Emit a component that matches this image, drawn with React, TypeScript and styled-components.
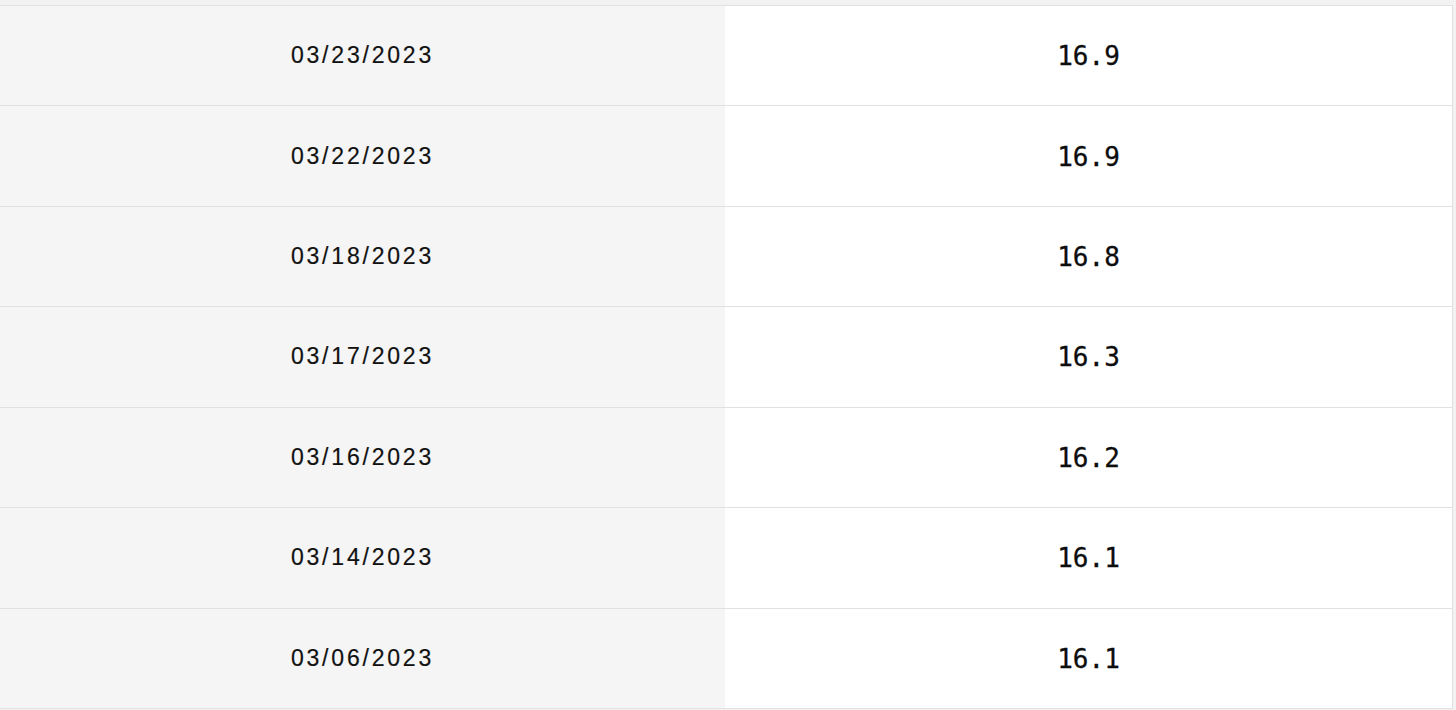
import React from 'react';
import styled, { createGlobalStyle } from 'styled-components';

const GlobalStyle = createGlobalStyle`
    html, body {
        margin: 0;
        padding: 0;
        background: #f2f2f2;
    }
`;

const rows = [
    { date: '03/23/2023', value: '16.9' },
    { date: '03/22/2023', value: '16.9' },
    { date: '03/18/2023', value: '16.8' },
    { date: '03/17/2023', value: '16.3' },
    { date: '03/16/2023', value: '16.2' },
    { date: '03/14/2023', value: '16.1' },
    { date: '03/06/2023', value: '16.1' },
];

const Page = styled.div`
    padding: 5px 3px 0 0;
    width: 1456px;
    box-sizing: border-box;
`;

const Table = styled.div`
    display: grid;
    grid-template-columns: 725px 1fr;
    border-top: 1px solid #e1e1e1;
    border-right: 1px solid #e1e1e1;
`;

const DateCell = styled.div`
    height: 100.43px;
    box-sizing: border-box;
    background: #f5f5f5;
    border-bottom: 1px solid #e1e1e1;
    display: flex;
    align-items: center;
    justify-content: center;
    font-family: 'Liberation Sans', Arial, sans-serif;
    font-size: 23px;
    letter-spacing: 2.8px;
    color: #111;
    -webkit-text-stroke: 0.2px #111;
`;

const ValueCell = styled.div`
    height: 100.43px;
    box-sizing: border-box;
    background: #ffffff;
    border-bottom: 1px solid #e1e1e1;
    display: flex;
    align-items: center;
    justify-content: center;
    font-family: 'DejaVu Sans Mono', 'Liberation Mono', monospace;
    font-size: 26px;
    color: #0d0d0d;
    -webkit-text-stroke: 0.3px #0d0d0d;
    padding-top: 1px;
`;

export default function App() {
    return (
        <Page>
            <GlobalStyle />
            <Table>
                {rows.map((r, i) => (
                    <React.Fragment key={i}>
                        <DateCell>{r.date}</DateCell>
                        <ValueCell>{r.value}</ValueCell>
                    </React.Fragment>
                ))}
            </Table>
        </Page>
    );
}
